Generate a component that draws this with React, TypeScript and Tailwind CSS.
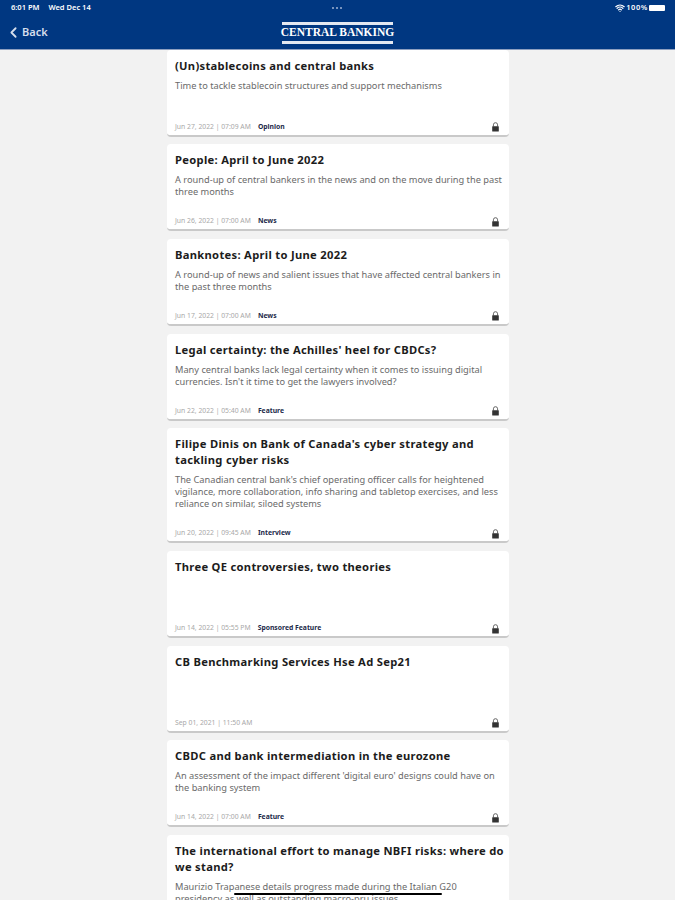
import React from 'react';
import { ChevronLeft, Wifi } from 'lucide-react';

interface Article {
  title: string;
  summary?: string;
  date: string;
  category: string;
}

const articles: Article[] = [
  {
    title: '(Un)stablecoins and central banks',
    summary: 'Time to tackle stablecoin structures and support mechanisms',
    date: 'Jun 27, 2022 | 07:09 AM',
    category: 'Opinion',
  },
  {
    title: 'People: April to June 2022',
    summary: 'A round-up of central bankers in the news and on the move during the past three months',
    date: 'Jun 26, 2022 | 07:00 AM',
    category: 'News',
  },
  {
    title: 'Banknotes: April to June 2022',
    summary: 'A round-up of news and salient issues that have affected central bankers in the past three months',
    date: 'Jun 17, 2022 | 07:00 AM',
    category: 'News',
  },
  {
    title: "Legal certainty: the Achilles' heel for CBDCs?",
    summary: "Many central banks lack legal certainty when it comes to issuing digital currencies. Isn't it time to get the lawyers involved?",
    date: 'Jun 22, 2022 | 05:40 AM',
    category: 'Feature',
  },
  {
    title: "Filipe Dinis on Bank of Canada's cyber strategy and tackling cyber risks",
    summary: "The Canadian central bank's chief operating officer calls for heightened vigilance, more collaboration, info sharing and tabletop exercises, and less reliance on similar, siloed systems",
    date: 'Jun 20, 2022 | 09:45 AM',
    category: 'Interview',
  },
  {
    title: 'Three QE controversies, two theories',
    date: 'Jun 14, 2022 | 05:55 PM',
    category: 'Sponsored Feature',
  },
  {
    title: 'CB Benchmarking Services Hse Ad Sep21',
    date: 'Sep 01, 2021 | 11:50 AM',
    category: '',
  },
  {
    title: 'CBDC and bank intermediation in the eurozone',
    summary: "An assessment of the impact different 'digital euro' designs could have on the banking system",
    date: 'Jun 14, 2022 | 07:00 AM',
    category: 'Feature',
  },
  {
    title: 'The international effort to manage NBFI risks: where do we stand?',
    summary: 'Maurizio Trapanese details progress made during the Italian G20 presidency as well as outstanding macro-pru issues',
    date: 'Jun 13, 2022 | 07:00 AM',
    category: 'Feature',
  },
];

// Small padlock shown on each subscriber-only article
const LockIcon = () => (
  <svg width="9" height="10" viewBox="0 0 9 10" className="mr-[1px] mt-[1px]">
    <path d="M2.4 4.5V2.8a2.1 2.1 0 0 1 4.2 0v1.7" fill="none" stroke="#666" strokeWidth="1" />
    <rect x="1.2" y="4.3" width="6.6" height="5.2" rx="0.5" fill="#333" />
  </svg>
);

const ArticleCard: React.FC<{ article: Article }> = ({ article }) => (
  <article className="flex flex-col shrink-0 bg-white rounded-sm border-b-2 border-[#c9c9c9] px-2 pt-2 pb-[2px]">
    <h2 className="-mr-[3px] text-[11.2px] leading-4 font-bold tracking-[0.3px] text-[#1c1c1c]">{article.title}</h2>
    <p className="mt-[6px] -mr-[2px] min-h-6 text-[9.25px] leading-3 text-[#6a6a6a]">{article.summary}</p>
    <div className="mt-[17px] h-3 flex items-center justify-between">
      <div className="flex items-center gap-[7px] text-[6.8px]">
        <span className="text-[#a8a8a8]">{article.date}</span>
        <span className="font-bold text-[#1d2a4a]">{article.category}</span>
      </div>
      <LockIcon />
    </div>
  </article>
);

export default function App() {
  return (
    <div className="relative h-[900px] w-[675px] overflow-hidden flex flex-col bg-[#f2f2f2] font-['Noto_Sans','Open_Sans',sans-serif]">
      {/* Status bar + nav */}
      <header className="shrink-0 h-[49.6px] bg-[#003781] border-b border-[#8d9fc0] text-white">
        <div className="relative h-4 flex items-center justify-between pl-[11px] pr-[10px] text-[7.5px] font-semibold">
          <div className="flex gap-[9px]">
            <span>6:01 PM</span>
            <span>Wed Dec 14</span>
          </div>
          <div className="absolute left-[332px] top-[7px] flex gap-[2px]">
            <span className="w-[2px] h-[2px] rounded-full bg-[#9fb3d3]" />
            <span className="w-[2px] h-[2px] rounded-full bg-[#9fb3d3]" />
            <span className="w-[2px] h-[2px] rounded-full bg-[#9fb3d3]" />
          </div>
          <div className="flex items-center gap-[1px]">
            <Wifi size={10} strokeWidth={3} />
            <span className="tracking-[0.6px]">100%</span>
            <span className="w-[16px] h-[6px] rounded-[1px] bg-white" />
          </div>
        </div>
        <div className="relative h-[32px] flex items-center pl-[5px]">
          <ChevronLeft size={17} strokeWidth={2.5} className="text-[#d5deec]" />
          <span className="text-[11px] font-semibold text-[#d5deec]">Back</span>
          <div className="absolute left-[282px] top-[6px] w-[111px] h-[22px] flex items-center justify-center border-t-[3px] border-b-[3px] border-[#e3e8f1] font-['Liberation_Serif',serif] font-bold text-[11.5px] text-white whitespace-nowrap">
            CENTRAL BANKING
          </div>
        </div>
      </header>

      {/* Article list */}
      <main className="flex-1 min-h-0 w-[342px] ml-[167px] flex flex-col gap-[7.7px]">
        {articles.map((article) => (
          <ArticleCard key={article.title} article={article} />
        ))}
      </main>

      {/* Home indicator */}
      <div className="absolute left-[234px] bottom-[5px] w-[208px] h-[2px] rounded-full bg-black" />
    </div>
  );
}
